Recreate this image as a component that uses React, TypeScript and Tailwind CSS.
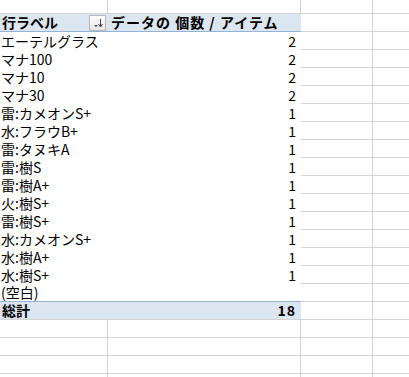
import React from "react";

type Row = { label: string; value: string };

const rows: Row[] = [
  { label: "エーテルグラス", value: "2" },
  { label: "マナ100", value: "2" },
  { label: "マナ10", value: "2" },
  { label: "マナ30", value: "2" },
  { label: "雷:カメオンS+", value: "1" },
  { label: "水:フラウB+", value: "1" },
  { label: "雷:タヌキA", value: "1" },
  { label: "雷:樹S", value: "1" },
  { label: "雷:樹A+", value: "1" },
  { label: "火:樹S+", value: "1" },
  { label: "雷:樹S+", value: "1" },
  { label: "水:カメオンS+", value: "1" },
  { label: "水:樹A+", value: "1" },
  { label: "水:樹S+", value: "1" },
  { label: "(空白)", value: "" },
];

const font = {
  fontFamily: '"Noto Sans CJK JP", "Noto Sans", sans-serif',
};

function FilterButton() {
  return (
    <div className="w-[17px] h-[16px] border border-[#b9b9b9] bg-gradient-to-b from-[#ffffff] to-[#e4e4e4] flex items-center justify-center">
      <svg width="15" height="14" viewBox="0 0 15 14">
        <path d="M4 9 L8 9 L6 11 Z" fill="#444" />
        <path d="M10.5 3 V10" stroke="#444" strokeWidth="1" />
        <path d="M8.5 8 L10.5 11 L12.5 8" stroke="#444" strokeWidth="1" fill="none" />
      </svg>
    </div>
  );
}

function GridFill({ h }: { h: string }) {
  return (
    <>
      <div className={`w-[72px] ${h} border-r border-b border-[#d4d4d4] shrink-0`} />
      <div className={`flex-1 ${h} border-b border-[#d4d4d4]`} />
    </>
  );
}

export default function App() {
  return (
    <div
      className="w-[409px] h-[377px] bg-white overflow-hidden text-[14px] text-black leading-[17px]"
      style={font}
    >
      {/* partial row above the pivot */}
      <div className="flex h-[14px]">
        <div className="w-[108px] shrink-0 border-r border-b border-[#d4d4d4]" />
        <div className="w-[193px] shrink-0 border-r border-b border-[#d4d4d4]" />
        <GridFill h="h-[14px]" />
      </div>

      {/* pivot header */}
      <div className="flex h-[18px]">
        <div className="w-[301px] shrink-0 flex bg-[#dce6f1] border-b border-[#95b3d7]">
          <div className="w-[108px] shrink-0 flex items-center justify-between pl-[2px] pr-[2px]">
            <span className="font-bold">行ラベル</span>
            <FilterButton />
          </div>
          <div className="flex-1 flex items-center pl-[3px]">
            <span className="font-bold tracking-[1px] whitespace-nowrap">データの 個数 / アイテム</span>
          </div>
        </div>
        <GridFill h="h-[18px]" />
      </div>

      {/* pivot body */}
      {rows.map((r, i) => (
        <div key={i} className="flex h-[18px]">
          <div
            className={`w-[301px] shrink-0 flex ${
              i === rows.length - 1 ? "border-b border-[#95b3d7]" : ""
            }`}
          >
            <div className="w-[108px] shrink-0 flex items-center pl-[1px] whitespace-nowrap">
              {r.label}
            </div>
            <div className="flex-1 flex items-center justify-end pr-[5px]">{r.value}</div>
          </div>
          <GridFill h="h-[18px]" />
        </div>
      ))}

      {/* grand total */}
      <div className="flex h-[18px]">
        <div className="w-[301px] shrink-0 flex bg-[#dce6f1] border-b border-[#d4d4d4]">
          <div className="w-[108px] shrink-0 flex items-center pl-[2px]">
            <span className="font-bold">総計</span>
          </div>
          <div className="flex-1 flex items-center justify-end pr-[5px]">
            <span className="font-bold tracking-[1px]">18</span>
          </div>
        </div>
        <GridFill h="h-[18px]" />
      </div>

      {/* empty sheet rows */}
      {[0, 1, 2, 3].map((i) => (
        <div key={i} className="flex h-[18px]">
          <div className="w-[108px] shrink-0 border-r border-b border-[#d4d4d4]" />
          <div className="w-[193px] shrink-0 border-r border-b border-[#d4d4d4]" />
          <GridFill h="h-[18px]" />
        </div>
      ))}
    </div>
  );
}
